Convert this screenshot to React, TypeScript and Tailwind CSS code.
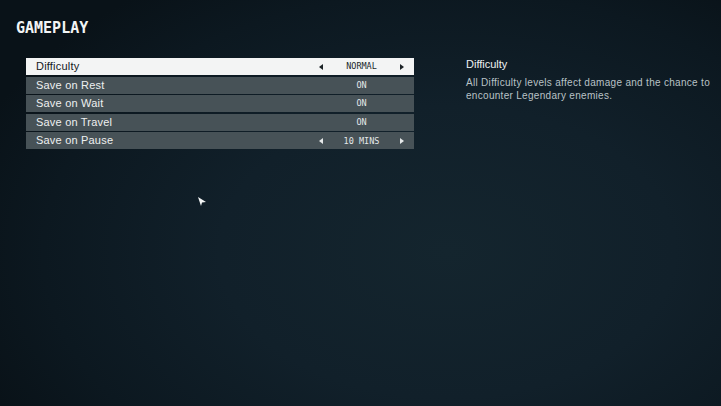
import React from "react";

type Row = {
  label: string;
  value: string;
  arrows?: boolean;
  active?: boolean;
};

const rows: Row[] = [
  { label: "Difficulty", value: "NORMAL", arrows: true, active: true },
  { label: "Save on Rest", value: "ON" },
  { label: "Save on Wait", value: "ON" },
  { label: "Save on Travel", value: "ON" },
  { label: "Save on Pause", value: "10 MINS", arrows: true },
];

function Caret({ dir, dark }: { dir: "left" | "right"; dark?: boolean }) {
  return (
    <svg width="4" height="6" viewBox="0 0 4 6" className="block">
      {dir === "left" ? (
        <polygon points="4,0 4,6 0,3" fill={dark ? "#1b2226" : "#e6e9ea"} />
      ) : (
        <polygon points="0,0 0,6 4,3" fill={dark ? "#1b2226" : "#e6e9ea"} />
      )}
    </svg>
  );
}

function SettingRow({ row }: { row: Row }) {
  const dark = row.active;
  return (
    <div
      className={`flex h-[17px] items-center ${
        dark ? "bg-[#f3f4f4] text-[#15191c]" : "bg-[#475257] text-[#eef0f0]"
      }`}
    >
      <div className="flex-1 pl-[10px] text-[11px] leading-none tracking-[0.2px] font-['Liberation_Sans',Arial,sans-serif]">
        {row.label}
      </div>
      <div className="flex w-[104px] items-center justify-between pl-[9px] pr-[10px]">
        <div className="w-[4px]">{row.arrows && <Caret dir="left" dark={dark} />}</div>
        <div
          className={`text-[8.5px] leading-none font-['DejaVu_Sans_Mono',monospace] ${
            dark ? "text-[#20272b]" : "text-[#e4e8e9]"
          }`}
        >
          {row.value}
        </div>
        <div className="w-[4px]">{row.arrows && <Caret dir="right" dark={dark} />}</div>
      </div>
    </div>
  );
}

export default function App() {
  return (
    <div className="relative h-[406px] w-[721px] overflow-hidden bg-[#0f1d25] bg-[radial-gradient(ellipse_70%_80%_at_62%_62%,#14252e_0%,#11202a_45%,#0c1820_80%,#091218_100%)]">
      <div className="pl-[16px] pt-[21px]">
        <h1 className="text-[15px] font-bold leading-none text-[#f2f4f4] font-['DejaVu_Sans_Mono',monospace]">
          GAMEPLAY
        </h1>
      </div>

      <div className="mt-[22px] flex">
        <div className="ml-[26px] flex w-[388px] shrink-0 flex-col gap-[1.6px]">
          {rows.map((r) => (
            <SettingRow key={r.label} row={r} />
          ))}
        </div>

        <div className="ml-[52px] min-w-0 pt-[1px] font-['Liberation_Sans',Arial,sans-serif]">
          <div className="text-[11px] leading-none text-[#eef1f2]">Difficulty</div>
          <p className="mt-[6px] w-[250px] text-[10px] leading-[13px] tracking-[0.3px] text-[#b9c2c6]">
            All Difficulty levels affect damage and the chance to encounter Legendary enemies.
          </p>
        </div>
      </div>

      {/* mouse pointer */}
      <svg
        className="absolute left-[197px] top-[196px]"
        width="10"
        height="11"
        viewBox="0 0 10 11"
      >
        <polygon points="1,1 9,6 5,6.5 4,10" fill="#f4f6f6" />
      </svg>
    </div>
  );
}
